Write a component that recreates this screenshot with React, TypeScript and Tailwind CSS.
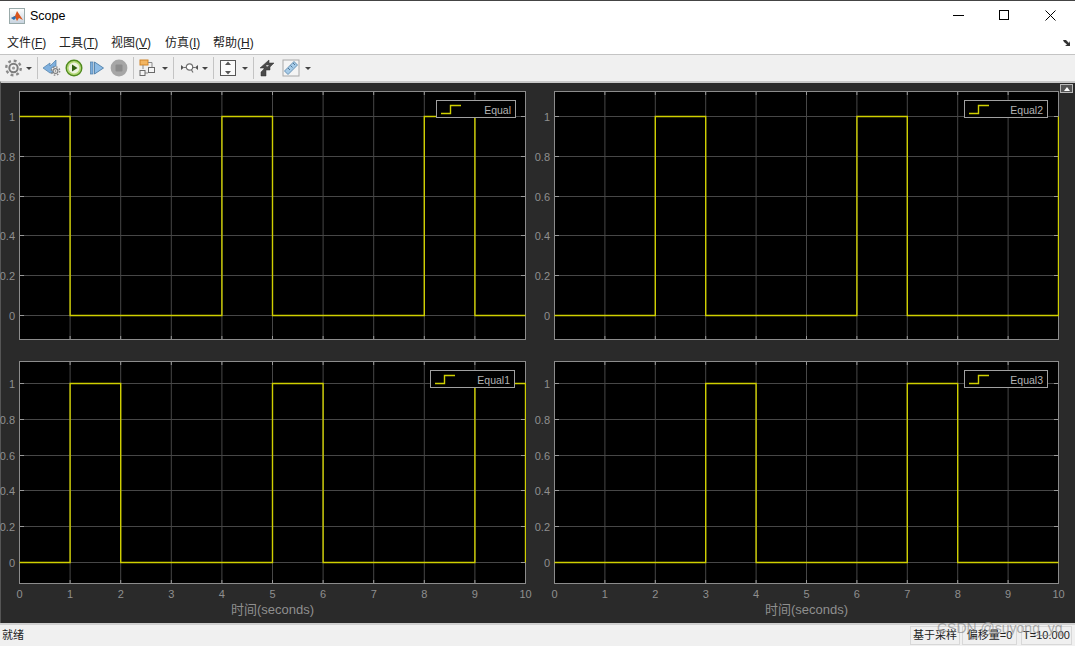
const CJK = { fontFamily: '"Liberation Sans", "Noto Sans CJK SC", sans-serif' }

const MENUS = [
  { label: '文件', key: 'F', x: 'w-[52px]' },
  { label: '工具', key: 'T', x: 'w-[52px]' },
  { label: '视图', key: 'V', x: 'w-[54px]' },
  { label: '仿真', key: 'I', x: 'w-[48px]' },
  { label: '帮助', key: 'H', x: 'w-[52px]' },
]

function Caret({ className }: { className: string }) {
  return <div className={'mr-[3px] h-0 w-0 border-x-[3px] border-t-[3px] border-x-transparent border-t-[#444] ' + className} />
}

function Sep() {
  return <div className="mx-[2px] h-[22px] w-px bg-[#c4c4c4]" />
}

function MatlabIcon() {
  return (
    <div className="flex h-[16px] w-[16px] items-center justify-center border border-[#9aa] bg-gradient-to-b from-[#fdfdfd] to-[#c8d4e0]">
      <svg width="14" height="14" viewBox="0 0 14 14">
        <path d="M1 9 L5 7 L7 2 L9 5 L13 11 L9 9 L7 12 L5 8 Z" fill="#d9541e" />
        <path d="M1 9 L5 7 L6 9 L4 11 Z" fill="#2b6fb5" />
      </svg>
    </div>
  )
}

function Gear({ x, y, r }: { x: number; y: number; r: number }) {
  const teeth = r * 1.4
  const dash = (2 * Math.PI * teeth) / 16
  return (
    <g>
      <circle cx={x} cy={y} r={teeth} fill="none" stroke="#8a8a8a" strokeWidth={r * 0.45} strokeDasharray={`${dash} ${dash}`} />
      <circle cx={x} cy={y} r={r} fill="#7d7d7d" />
      <circle cx={x} cy={y} r={r * 0.62} fill="#f2f2f2" />
      <circle cx={x} cy={y} r={r * 0.3} fill="#9a9a9a" />
    </g>
  )
}

function Toolbar() {
  return (
    <div className="flex h-[26px] items-center bg-[#f0f0f0] pl-[5px]">
      <svg width="17" height="18" viewBox="0 0 17 18">
        <Gear x={8.5} y={9} r={5.2} />
      </svg>
      <Caret className="ml-[4px]" />
      <Sep />
      {/* step back */}
      <svg className="ml-[2px]" width="20" height="18" viewBox="0 0 20 18">
        <path d="M1 9 L8 4 V7 L14 1 V7 L9 9 L11 14 L8 14 L1 9 Z" fill="#7fb0de" stroke="#4d7ea8" strokeWidth="0.7" />
        <Gear x={13.5} y={12} r={3} />
      </svg>
      {/* run */}
      <svg className="ml-[3px]" width="18" height="18" viewBox="0 0 18 18">
        <circle cx="9" cy="9" r="7.8" fill="#b6d97a" stroke="#4f8a1d" strokeWidth="1.4" />
        <circle cx="9" cy="9" r="5.4" fill="#eef3e2" />
        <path d="M7 5.5 L12.5 9 L7 12.5 Z" fill="#2f5f10" />
      </svg>
      {/* step forward */}
      <svg className="ml-[6px]" width="16" height="18" viewBox="0 0 16 18">
        <rect x="1.5" y="3" width="2.5" height="12" fill="#7fb0de" stroke="#4d7ea8" strokeWidth="0.7" />
        <path d="M5.5 3 L14.5 9 L5.5 15 Z" fill="#8dbce6" stroke="#4d7ea8" strokeWidth="0.9" />
      </svg>
      {/* stop */}
      <svg className="ml-[5px]" width="18" height="18" viewBox="0 0 18 18">
        <circle cx="9" cy="9" r="8.4" fill="#a6a6a6" />
        <rect x="5.5" y="5.5" width="7" height="7" rx="1" fill="#8c8c8c" />
      </svg>
      <div className="ml-[3px]"><Sep /></div>
      {/* highlight block */}
      <svg className="ml-[1px]" width="20" height="20" viewBox="0 0 20 20">
        <rect x="3" y="2" width="8" height="5" fill="#f2b562" stroke="#d08428" />
        <path d="M11 4.5 H15 V9 M6 7 V11 M7 15 H11" fill="none" stroke="#8a8a8a" />
        <rect x="3" y="12.5" width="5" height="5" fill="#f4f4f4" stroke="#6a6a6a" />
        <rect x="11.5" y="9.5" width="6" height="5" fill="#f4f4f4" stroke="#6a6a6a" />
      </svg>
      <Caret className="ml-[5px]" />
      <Sep />
      {/* signal probe */}
      <svg className="ml-[3px]" width="20" height="16" viewBox="0 0 20 16">
        <path d="M2 5 L5 7.5 L2 10 Z M19 5 L16 7.5 L19 10 Z" fill="#555" />
        <circle cx="10.5" cy="7" r="3.2" fill="#fff" stroke="#707070" strokeWidth="1.2" />
        <path d="M5 7.5 H7 M14 7.5 H16 M12.5 10 L14 12.5" stroke="#707070" strokeWidth="1.2" />
      </svg>
      <Caret className="ml-[3px]" />
      <Sep />
      {/* scale axes */}
      <svg className="ml-[3px]" width="18" height="20" viewBox="0 0 18 20">
        <rect x="1.5" y="2.5" width="15" height="15" fill="#fafafa" stroke="#555" />
        <path d="M9 3.5 L12 7 H6 Z M9 16.5 L12 13 H6 Z" fill="#555" />
      </svg>
      <Caret className="ml-[5px]" />
      <Sep />
      {/* style */}
      <svg className="ml-[2px]" width="18" height="20" viewBox="0 0 18 20">
        <path d="M2 10 L11 2 L11 5 L16 5 L12 9 L12 12 L8 12 L8 18 L3 18 L3 14 L6 11 L6 10 Z" fill="#4a4a4a" stroke="#333" strokeWidth="0.5" />
        <path d="M8 7 L11 7 L9 9 Z" fill="#c8c8c8" />
      </svg>
      {/* measurements */}
      <svg className="ml-[6px]" width="18" height="18" viewBox="0 0 18 18">
        <rect x="1" y="1" width="16" height="16" fill="#f4f4f4" stroke="#a8a8a8" />
        <path d="M2.5 12 L12 2.5 L15.5 6 L6 15.5 Z" fill="#a6cbe8" stroke="#6a94b6" />
        <path d="M6 9 L8 11 M8.5 6.5 L10.5 8.5 M11 4 L13 6" stroke="#4f7898" />
      </svg>
      <Caret className="ml-[5px]" />
    </div>
  )
}

type AxesProps = {
  width: number
  height: number
  top: number
  bottom: number
  highs: number[]
  name: string
  legendW: number
  legendRight: number
  showX?: boolean
}

function Axes({ width, height, top, bottom, highs, name, legendW, legendRight, showX }: AxesProps) {
  const xAt = (t: number) => (t / 10) * (width - 1) + 0.5
  const yAt = (v: number) => Math.round(bottom + (top - bottom) * v) + 0.5
  const ticks = [0, 0.2, 0.4, 0.6, 0.8, 1]
  const xs = [0, 1, 2, 3, 4, 5, 6, 7, 8, 9, 10]

  let level = highs.includes(0) ? 1 : 0
  let d = `M${xAt(0)} ${yAt(level)}`
  for (let t = 1; t <= 10; t++) {
    const next = highs.includes(t) ? 1 : 0
    d += ` H${xAt(t)}`
    if (next !== level) d += ` V${yAt(next)}`
    level = next
  }

  return (
    <div className="relative" style={{ width, height }}>
      <svg width={width} height={height} className="block">
        <rect x="0" y="0" width={width} height={height} fill="#000" />
        {xs.slice(1, -1).map((t) => (
          <g key={t}>
            <line x1={xAt(t)} x2={xAt(t)} y1="0" y2={height} stroke="#474747" />
            <line x1={xAt(t)} x2={xAt(t)} y1="0" y2="4" stroke="#9a9a9a" />
            <line x1={xAt(t)} x2={xAt(t)} y1={height - 4} y2={height} stroke="#9a9a9a" />
          </g>
        ))}
        {ticks.map((v) => (
          <g key={v}>
            <line x1="0" x2={width} y1={yAt(v)} y2={yAt(v)} stroke="#474747" />
            <line x1="0" x2="5" y1={yAt(v)} y2={yAt(v)} stroke="#9a9a9a" />
            <line x1={width - 5} x2={width} y1={yAt(v)} y2={yAt(v)} stroke="#9a9a9a" />
          </g>
        ))}
        <rect x="0.5" y="0.5" width={width - 1} height={height - 1} fill="none" stroke="#8c8c8c" />
        <path d={d} fill="none" stroke="#cfcf00" strokeWidth="1.4" />
      </svg>

      {ticks.map((v) => (
        <span
          key={v}
          className="absolute -left-[24px] w-[20px] text-right text-[11px] leading-[12px] text-[#8f8f8f]"
          style={{ top: yAt(v) - 6 }}
        >
          {v}
        </span>
      ))}

      {showX &&
        xs.map((t) => (
          <span
            key={t}
            className="absolute w-[20px] text-center text-[11px] leading-[12px] text-[#8f8f8f]"
            style={{ left: xAt(t) - 10, top: height + 4 }}
          >
            {t}
          </span>
        ))}

      <div
        className="absolute top-[9px] flex h-[18px] items-center justify-between border border-[#a0a0a0] bg-black pl-[3px] pr-[4px]"
        style={{ width: legendW, right: legendRight }}
      >
        <svg width="22" height="12" viewBox="0 0 22 12">
          <path d="M1 10.5 H10.5 V2.5 H21" fill="none" stroke="#cfcf00" strokeWidth="1.4" />
        </svg>
        <span className="mt-[2px] text-[10.5px] leading-none text-[#b4b4b4]">{name}</span>
      </div>
    </div>
  )
}

function XLabel() {
  return <div className="mt-[18px] text-center text-[13px] leading-[16px] text-[#8f8f8f]">时间(seconds)</div>
}

export default function App() {
  return (
    <div className="relative flex h-[646px] w-[1075px] flex-col overflow-hidden bg-white text-black antialiased" style={CJK}>
      <div className="h-px shrink-0 bg-[#444]" />
      {/* title bar */}
      <div className="flex h-[30px] shrink-0 items-center bg-white pl-[9px]">
        <MatlabIcon />
        <span className="ml-[5px] text-[12.5px]">Scope</span>
        <div className="mb-[2px] ml-auto flex items-center pr-[19px]">
          <div className="h-px w-[11px] bg-black" />
          <div className="ml-[35px] h-[10px] w-[10px] border border-black" />
          <svg className="ml-[36px]" width="11" height="11" viewBox="0 0 11 11">
            <path d="M0.5 0.5 L10.5 10.5 M10.5 0.5 L0.5 10.5" stroke="#000" />
          </svg>
        </div>
      </div>
      {/* menu bar */}
      <div className="flex h-[24px] shrink-0 items-center border-b border-[#c4c4c4] bg-white pl-[7px] text-[12px] text-[#222]">
        {MENUS.map((m) => (
          <div key={m.key} className={m.x}>
            {m.label}(<span className="underline">{m.key}</span>)
          </div>
        ))}
        <svg className="ml-auto mr-[4px]" width="8" height="8" viewBox="0 0 8 8">
          <path d="M0 1 L3 1 L6 4 L7 2 V7 H2 L4 5.5 L1 3 Z" fill="#333" />
        </svg>
      </div>
      <Toolbar />
      {/* plot area */}
      <div className="relative flex min-h-0 flex-1 flex-col border-t-2 border-l border-t-[#c8c8c8] border-l-[#555] bg-[#2a2a2a] pl-[18px] pt-[8px]">
        <div className="absolute right-[2px] top-[1px] flex h-[9px] w-[13px] items-center justify-center border border-[#bbb] bg-[#555]">
          <div className="h-0 w-0 border-x-[3px] border-b-[4px] border-x-transparent border-b-white" />
        </div>
        <div className="grid grid-cols-[507px_505px] gap-x-[28px] gap-y-[21px]">
          <Axes width={507} height={249} top={25} bottom={224} highs={[0, 4, 8]} name="Equal" legendW={80} legendRight={10} />
          <Axes width={505} height={249} top={25} bottom={224} highs={[2, 6, 10]} name="Equal2" legendW={84} legendRight={11} />
          <div>
            <Axes width={507} height={223} top={22} bottom={201} highs={[1, 5, 9]} name="Equal1" legendW={85} legendRight={11} showX />
            <XLabel />
          </div>
          <div>
            <Axes width={505} height={223} top={22} bottom={201} highs={[3, 7]} name="Equal3" legendW={84} legendRight={11} showX />
            <XLabel />
          </div>
        </div>
      </div>
      {/* status bar */}
      <div className="flex h-[23px] shrink-0 items-center border-t-2 border-t-[#d0d0d0] bg-[#f0f0f0] pl-[2px] text-[11px] text-[#222]">
        <span>就绪</span>
        <div className="ml-auto flex h-[19px] items-stretch pr-[3px]">
          <div className="flex w-[50px] items-center justify-center border border-[#d8d8d8]">基于采样</div>
          <div className="ml-[2px] flex w-[55px] items-center justify-center border border-[#d8d8d8]">偏移量=0</div>
          <div className="ml-[4px] flex w-[51px] items-center justify-center border border-[#d8d8d8]">T=10.000</div>
        </div>
      </div>
      <span className="absolute left-[937px] top-[620px] text-[14px] leading-[16px] text-[#8a8a8a]/70">CSDN @suyong_yq</span>
    </div>
  )
}
